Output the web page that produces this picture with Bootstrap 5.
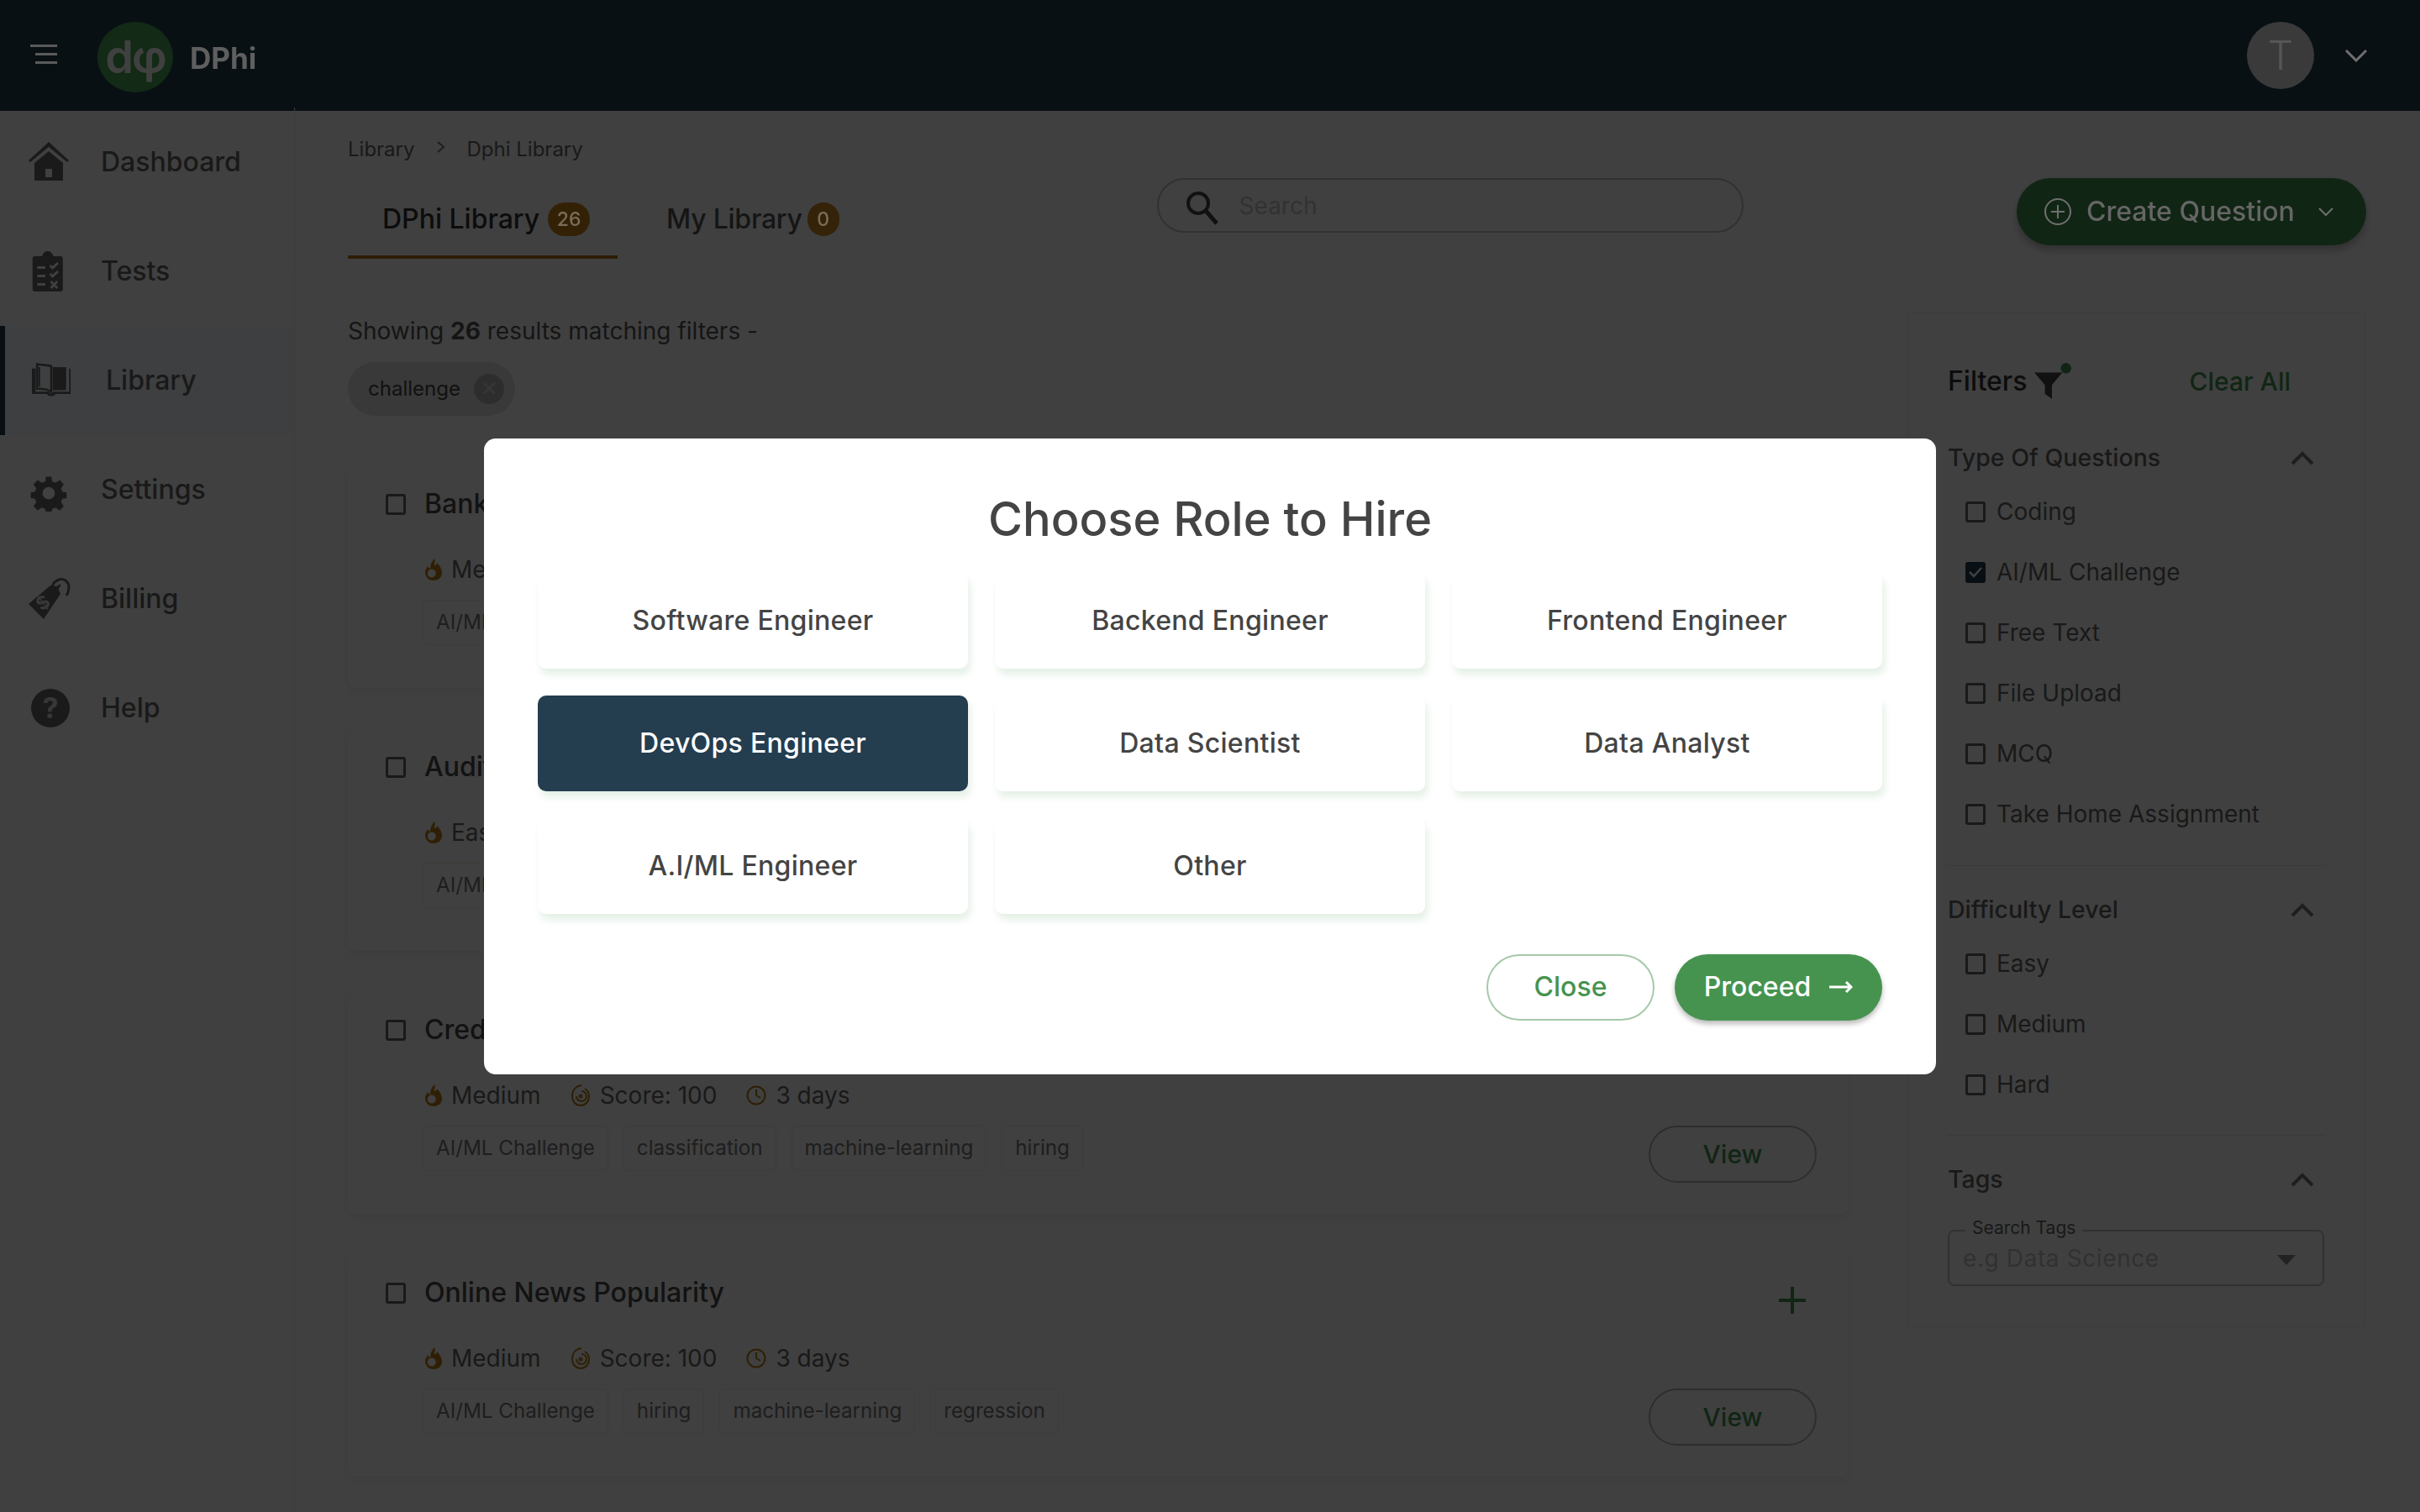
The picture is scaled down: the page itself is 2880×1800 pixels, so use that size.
<!doctype html>
<html lang="en">
<head>
<meta charset="utf-8">
<title>DPhi Library</title>
<link href="https://cdn.jsdelivr.net/npm/bootstrap@5.3.0/dist/css/bootstrap.min.css" rel="stylesheet">
<style>
html,body{height:100%;overflow:hidden}
body{font-family:Inter,"Noto Sans",sans-serif;color:#4a4a4a;background:#fff}
.topbar{height:132px;background:#25424f;flex:none}
.lift{position:relative;z-index:1060}
.burger{width:32px;margin-left:36px;margin-top:-2px}
.logo-disc{width:90px;height:84px;border-radius:50%;background:#4aa758;color:#fff;margin-left:48px;margin-top:4px;font-size:54px;line-height:1;font-weight:600;letter-spacing:-2px}
.logo-word{font-size:35px;font-weight:700;color:#5f5f5f;margin-left:20px;margin-top:6px}
.avatar{width:80px;height:80px;border-radius:50%;background:#e6e6e6;font-size:48px;font-weight:300}
.avatar span{color:#565656}
.top-caret{margin:0 62px 0 36px}
.page-body{height:calc(100vh - 132px)}
.side{width:351px;flex:none;border-right:1px solid #e9e9e9;margin-top:-4px}
.side-row{height:130px;padding-left:32px;gap:36px;font-size:32px;font-weight:500;color:#666}
.side-row.on{background:#f4fbff;box-shadow:inset 6px 0 0 #233d4f}
.side-row.on span{margin-left:6px}
.side-ico{width:52px;height:52px;flex:none}
.main-col{min-width:0;flex:1}
.head-zone{height:188px;padding:0 64px 0 63px;box-shadow:0 3px 6px rgba(0,0,0,.025)}
.crumbs{font-size:24px;color:#666;height:86px;padding-top:28px;gap:25px}
.tabs-row{height:97px}
.lib-tab{height:90px;padding:0 33px 0 41px;font-size:32px;font-weight:500;color:#555;gap:10px;border-bottom:4px solid transparent}
.lib-tab.on{border-bottom-color:#b8741a;color:#333;margin-right:17px}
.lib-tab.off{padding-left:41px;letter-spacing:-.25px;gap:6px}
.count{height:40px;border-radius:20px;min-width:38px;background:#cf8a25;font-size:23px;padding:0 8px;letter-spacing:0}
.count span{color:#7a6d5a}
.count.strong{width:50px;background:#c98319}
.search-box{position:relative;width:698px;height:65px;border:2px solid #c2c2c2;border-radius:33px;margin-left:345px;margin-top:-6px;color:#c6c6c6;font-size:28px;padding-left:96px}
.search-box svg{position:absolute;left:30px;top:11px}
.new-q{width:416px;height:80px;border-radius:40px;background:#46934f;color:#666;font-size:32px;font-weight:500;box-shadow:0 6px 10px rgba(0,0,0,.25);margin-left:auto;margin-top:-6px;padding:0 0 0 32px;gap:17px}
.new-q span{width:258px}
.body-zone{padding:56px 65px 0 63px;gap:70px}
.results{width:1786px;flex:none}
.shown{font-size:28px;color:#555;line-height:36px;height:36px}
.chip-x{display:inline-flex;height:64px;border-radius:32px;background:#e3e3e3;padding:0 13px 0 24px;gap:16px;font-size:24px;color:#444;margin-top:19px;width:199px}
.chip-x i{width:36px;height:36px;border-radius:50%;background:#b5b5b5;color:#d8d8d8;font-style:normal;font-size:24px;line-height:36px;text-align:center}
.q-card{height:270px;margin-bottom:43px;border-radius:10px;box-shadow:0 5px 12px rgba(0,0,0,.07);padding:27px 38px 0 45px;position:relative}
.q-first{margin-top:54px}
.tick{width:24px;height:25px;border:3px solid #666;border-radius:3px;flex:none}
.tick.ok{background:#233d4f;border-color:#233d4f;display:flex;align-items:center;justify-content:center}
.q-title{font-size:32px;font-weight:500;color:#4a4a4a;margin-left:22px}
.q-meta{font-size:28px;color:#666;margin:34px 0 0 47px;height:40px}
.q-meta span{display:inline-flex;align-items:center;gap:11px;margin-right:35px}
.q-tags{gap:18px;margin:16px 0 0 44px;font-size:24.2px;color:#777}
.q-tag{height:54px;padding:0 15px;border:1px solid #eee;border-radius:5px;display:flex;align-items:center}
.q-tag.lead-tag{border-color:#f6eedd}
.view-btn{width:200px;height:68px;border:2px solid #b5b5b5;border-radius:34px;color:#46934f;font-size:30px;font-weight:500;position:absolute;right:38px;bottom:37px}
.add-btn{position:absolute;right:50px;top:43px}
.filter-box{width:545px;flex:none;height:1208px;margin-top:-4px;border:1px solid #f0f0f0;padding:58px 48px 0 47px}
.f-head{height:46px}
.f-head b{font-size:32px;font-weight:500;color:#333}
.f-clear{font-size:30px;font-weight:500;color:#46934f;margin-left:auto;margin-right:40px}
.f-group{border-bottom:1px solid #e6e6e6}
.f-group-type{height:554px;padding-top:48px}
.f-group-level{height:321px;padding-top:32px}
.f-group-tags{padding-top:32px}
.f-name{font-size:28.5px;font-weight:500;color:#666;height:40px;padding-right:12px}
.f-item{height:72px;padding-left:21px;gap:13px;font-size:28px;color:#666}
.f-pick{position:relative;height:67px;border:2px solid #c4c4c4;border-radius:8px;margin-top:40px;padding-left:16px;font-size:28px;color:#c4c4c4;letter-spacing:.6px}
.f-pick em{position:absolute;left:19px;top:-17px;background:#fff;padding:0 8px;font-style:normal;font-size:21px;color:#666;line-height:26px;letter-spacing:0}
.f-pick u{position:absolute;right:32px;top:28px;border:11px solid transparent;border-top:12px solid #888;border-bottom:0}
.modal-backdrop.show{opacity:.75}
.role-dialog{max-width:1728px;width:1728px;margin:0 auto;min-height:100%}
.role-sheet{border:0;border-radius:14px;padding:64px;background:#fff}
.role-title{font-size:56px;font-weight:500;color:#444;line-height:68px;margin:-2px 0 30px;text-align:center}
.role-grid{display:grid;grid-template-columns:repeat(3,1fr);gap:32px}
.role-tile{height:114px;border-radius:10px;background:#fff;font-size:32px;font-weight:500;letter-spacing:.3px;color:#444;box-shadow:3px 7px 9px rgba(70,147,80,.14)}
.role-tile.picked{background:#243d4f;color:#fff}
.role-foot{gap:24px;margin-top:48px}
.pill{height:79px;border-radius:40px;font-size:32px;font-weight:500}
.pill-line{width:200px;border:2px solid #a5c9a9;color:#46934f;background:#fff}
.pill-fill{width:247px;background:#46934f;color:#fff;gap:22px;box-shadow:0 4px 6px rgba(0,0,0,.28)}
</style>
</head>
<body class="d-flex flex-column">
<header class="topbar d-flex align-items-center">
  <svg class="burger lift" viewBox="0 0 32 24" height="24" fill="#5a5a5a"><rect x="0" y="0" width="32" height="3"/><rect x="6" y="10" width="26" height="3"/><rect x="6" y="20" width="26" height="3"/></svg>
  <div class="logo-disc d-flex align-items-center justify-content-center">dφ</div>
  <div class="logo-word lift">DPhi</div>
  <div class="avatar d-flex align-items-center justify-content-center ms-auto"><span class="lift">T</span></div>
  <svg class="top-caret lift" width="28" height="16" viewBox="0 0 28 16" fill="none" stroke="#6f6f6f" stroke-width="3"><path d="M2 2l12 12L26 2"/></svg>
</header>
<div class="page-body d-flex">
  <aside class="side">
    <div class="side-row d-flex align-items-center">
      <svg class="side-ico" viewBox="0 0 52 52" fill="#6a6a6a"><path d="M26 2L2 24l2 2L26 8l22 18 2-2z"/><path d="M9 27L26 13l17 14v21H9zm13 7v10h8V34z" fill-rule="evenodd"/></svg><span>Dashboard</span></div>
    <div class="side-row d-flex align-items-center">
      <svg class="side-ico" viewBox="0 0 52 52" fill="#6a6a6a"><path transform="translate(1 0) scale(.95 1)" fill-rule="evenodd" d="M9 8h9c1-4 4-6 7-6s6 2 7 6h9c2 0 3 1 3 3v36c0 2-1 3-3 3H9c-2 0-3-1-3-3V11c0-2 1-3 3-3zm3 12v3h10v-3zm0 10v3h10v-3zm0 10v3h10v-3zm15-20l4 4 8-7-2-2-6 5-2-2zm0 10l4 4 8-7-2-2-6 5-2-2zm1 9l3 3-3 3 2 2 3-3 3 3 2-2-3-3 3-3-2-2-3 3-3-3z"/></svg><span>Tests</span></div>
    <div class="side-row on d-flex align-items-center">
      <svg class="side-ico" viewBox="0 0 52 52" fill="#6a6a6a"><g transform="translate(6 3) scale(.885)"><path d="M7 4l17 2c1 0 2 1 2 2v33c-4-3-10-4-19-4z" fill="none" stroke="#6a6a6a" stroke-width="3"/><path d="M28 8h18v31H28z"/><path d="M2 10h3v31h18l3 3 3-3h21V10h2v34H32l-3 3h-6l-3-3H0V10z"/><path d="M10 8v26" stroke="#6a6a6a" stroke-width="2"/></g></svg><span>Library</span></div>
    <div class="side-row d-flex align-items-center">
      <svg class="side-ico" viewBox="0 0 52 52" fill="#6a6a6a"><path fill-rule="evenodd" d="M22 3h8l1 7 5 2 6-4 6 6-4 6 2 5 6 1v8l-6 1-2 5 4 6-6 6-6-4-5 2-1 6h-8l-1-6-5-2-6 4-6-6 4-6-2-5-6-1v-8l6-1 2-5-4-6 6-6 6 4 5-2zm4 15a9 9 0 100 18 9 9 0 000-18z" transform="translate(4.6 8) scale(.82)"/></svg><span>Settings</span></div>
    <div class="side-row d-flex align-items-center">
      <svg class="side-ico" viewBox="0 0 52 52"><path d="M2 32L28 10l8 1 4 9-20 30z" fill="#6a6a6a"/><path d="M32 20c-4-6-2-14 6-17 6-2 11 2 12 8 0 4-1 8-3 11M37 18c-2-3 0-8 3-8" fill="none" stroke="#6a6a6a" stroke-width="3"/><text x="20" y="38" font-size="22" font-weight="700" fill="#fff" fill-opacity=".8" text-anchor="middle" transform="rotate(-35 20 32)" font-family="Inter">$</text></svg><span>Billing</span></div>
    <div class="side-row d-flex align-items-center">
      <svg class="side-ico" viewBox="0 0 52 52"><circle cx="28" cy="26" r="23" fill="#6a6a6a"/><text x="28" y="38" font-size="34" font-weight="700" fill="#fff" fill-opacity=".75" text-anchor="middle" font-family="Inter">?</text></svg><span>Help</span></div>
  </aside>
  <main class="main-col">
    <section class="head-zone">
      <div class="crumbs d-flex"><span>Library</span><svg width="12" height="22" viewBox="0 0 12 22" fill="none" stroke="#777" stroke-width="2" class="mt-1"><path d="M2 5l7 6-7 6"/></svg><span>Dphi Library</span></div>
      <div class="tabs-row d-flex">
        <div class="lib-tab on d-flex align-items-center">DPhi Library <div class="count strong d-flex align-items-center justify-content-center"><span class="lift">26</span></div></div>
        <div class="lib-tab off d-flex align-items-center">My Library <div class="count d-flex align-items-center justify-content-center"><span class="lift">0</span></div></div>
        <div class="search-box d-flex align-items-center"><svg width="44" height="44" viewBox="0 0 44 44" fill="none" stroke="#444" stroke-width="4"><circle cx="17" cy="17" r="12"/><path d="M26 26l13 15" stroke-width="5"/></svg>Search</div>
        <div class="new-q d-flex align-items-center">
          <svg width="34" height="34" viewBox="0 0 34 34" fill="none" stroke="#6f6f6f" stroke-width="2" class="lift"><circle cx="17" cy="17" r="15"/><path d="M17 9v16M9 17h16"/></svg><span class="lift">Create Question</span><svg width="20" height="12" viewBox="0 0 20 12" fill="none" stroke="#6f6f6f" stroke-width="2" class="lift"><path d="M2 2l8 8 8-8"/></svg>
        </div>
      </div>
    </section>
    <section class="body-zone d-flex align-items-start">
      <div class="results">
        <div class="shown">Showing <b>26</b> results matching filters -</div>
        <div class="chip-x align-items-center">challenge <i>✕</i></div>
        <article class="q-card q-first"><div class="d-flex align-items-center"><div class="tick"></div><div class="q-title">Bank</div></div>
          <div class="q-meta d-flex align-items-center"><span><svg width="20" height="26" viewBox="0 0 20 26" fill="#b97b16"><path fill-rule="evenodd" d="M11 0c2 4-1 6 0 8 2 0 3-2 3-3 4 4 6 8 6 12 0 5-4 9-10 9S0 22 0 16c0-3 2-5 3-7 1 2 2 3 3 3 0-5 2-9 5-12zm-1 13a5 5 0 100 9 5 5 0 000-9z"/></svg>Medium</span></div>
          <div class="q-tags d-flex"><div class="q-tag lead-tag">AI/ML Challenge</div></div></article>
        <article class="q-card"><div class="d-flex align-items-center"><div class="tick"></div><div class="q-title">Audit</div></div>
          <div class="q-meta d-flex align-items-center"><span><svg width="20" height="26" viewBox="0 0 20 26" fill="#b97b16"><path fill-rule="evenodd" d="M11 0c2 4-1 6 0 8 2 0 3-2 3-3 4 4 6 8 6 12 0 5-4 9-10 9S0 22 0 16c0-3 2-5 3-7 1 2 2 3 3 3 0-5 2-9 5-12zm-1 13a5 5 0 100 9 5 5 0 000-9z"/></svg>Easy</span></div>
          <div class="q-tags d-flex"><div class="q-tag lead-tag">AI/ML Challenge</div></div></article>
        <article class="q-card"><div class="d-flex align-items-center"><div class="tick"></div><div class="q-title">Credit</div></div>
          <div class="q-meta d-flex align-items-center"><span><svg width="20" height="26" viewBox="0 0 20 26" fill="#b97b16"><path fill-rule="evenodd" d="M11 0c2 4-1 6 0 8 2 0 3-2 3-3 4 4 6 8 6 12 0 5-4 9-10 9S0 22 0 16c0-3 2-5 3-7 1 2 2 3 3 3 0-5 2-9 5-12zm-1 13a5 5 0 100 9 5 5 0 000-9z"/></svg>Medium</span><span><svg width="24" height="28" viewBox="0 0 24 28" fill="none" stroke="#b97b16" stroke-width="2"><path d="M13 2C6 3 2 8 2 15c0 6 4 11 10 11s10-5 10-11c0-4-2-7-5-9"/><path d="M13 9a6 6 0 11-6 6"/><circle cx="12" cy="15" r="1.5"/></svg>Score: 100</span><span><svg width="24" height="26" viewBox="0 0 24 26" fill="none" stroke="#b97b16" stroke-width="2"><circle cx="12" cy="13" r="10.5"/><path d="M12 6v7l5 3"/></svg>3 days</span></div>
          <div class="q-tags d-flex"><div class="q-tag lead-tag">AI/ML Challenge</div><div class="q-tag">classification</div><div class="q-tag">machine-learning</div><div class="q-tag">hiring</div></div>
          <div class="view-btn d-flex align-items-center justify-content-center">View</div></article>
        <article class="q-card"><div class="d-flex align-items-center"><div class="tick"></div><div class="q-title">Online News Popularity</div></div>
          <svg class="add-btn" width="34" height="34" viewBox="0 0 34 34" stroke="#46934f" stroke-width="4"><path d="M17 1v32M1 17h32"/></svg>
          <div class="q-meta d-flex align-items-center"><span><svg width="20" height="26" viewBox="0 0 20 26" fill="#b97b16"><path fill-rule="evenodd" d="M11 0c2 4-1 6 0 8 2 0 3-2 3-3 4 4 6 8 6 12 0 5-4 9-10 9S0 22 0 16c0-3 2-5 3-7 1 2 2 3 3 3 0-5 2-9 5-12zm-1 13a5 5 0 100 9 5 5 0 000-9z"/></svg>Medium</span><span><svg width="24" height="28" viewBox="0 0 24 28" fill="none" stroke="#b97b16" stroke-width="2"><path d="M13 2C6 3 2 8 2 15c0 6 4 11 10 11s10-5 10-11c0-4-2-7-5-9"/><path d="M13 9a6 6 0 11-6 6"/><circle cx="12" cy="15" r="1.5"/></svg>Score: 100</span><span><svg width="24" height="26" viewBox="0 0 24 26" fill="none" stroke="#b97b16" stroke-width="2"><circle cx="12" cy="13" r="10.5"/><path d="M12 6v7l5 3"/></svg>3 days</span></div>
          <div class="q-tags d-flex"><div class="q-tag lead-tag">AI/ML Challenge</div><div class="q-tag">hiring</div><div class="q-tag">machine-learning</div><div class="q-tag">regression</div></div>
          <div class="view-btn d-flex align-items-center justify-content-center">View</div></article>
      </div>
      <aside class="filter-box">
        <div class="f-head d-flex align-items-center"><b>Filters</b>
          <svg width="46" height="46" viewBox="0 0 44 44" class="ms-2"><path d="M1 12h32L21 26v16l-8-6V26z" fill="#444"/><circle cx="37" cy="7" r="6" fill="#46934f"/></svg>
          <span class="f-clear">Clear All</span></div>
        <div class="f-group f-group-type">
          <div class="f-name d-flex align-items-center justify-content-between">Type Of Questions<svg width="28" height="18" viewBox="0 0 28 18" fill="none" stroke="#777" stroke-width="4"><path d="M2 16L14 4l12 12"/></svg></div>
          <div class="f-item d-flex align-items-center mt-2"><div class="tick"></div>Coding</div>
          <div class="f-item d-flex align-items-center"><div class="tick ok"><svg width="16" height="14" viewBox="0 0 16 14" fill="none" stroke="#fff" stroke-width="2.5"><path d="M1 7l5 5 9-10"/></svg></div>AI/ML Challenge</div>
          <div class="f-item d-flex align-items-center"><div class="tick"></div>Free Text</div>
          <div class="f-item d-flex align-items-center"><div class="tick"></div>File Upload</div>
          <div class="f-item d-flex align-items-center"><div class="tick"></div>MCQ</div>
          <div class="f-item d-flex align-items-center"><div class="tick"></div>Take Home Assignment</div>
        </div>
        <div class="f-group f-group-level">
          <div class="f-name d-flex align-items-center justify-content-between">Difficulty Level<svg width="28" height="18" viewBox="0 0 28 18" fill="none" stroke="#777" stroke-width="4"><path d="M2 16L14 4l12 12"/></svg></div>
          <div class="f-item d-flex align-items-center mt-2"><div class="tick"></div>Easy</div>
          <div class="f-item d-flex align-items-center"><div class="tick"></div>Medium</div>
          <div class="f-item d-flex align-items-center"><div class="tick"></div>Hard</div>
        </div>
        <div class="f-group-tags">
          <div class="f-name d-flex align-items-center justify-content-between">Tags<svg width="28" height="18" viewBox="0 0 28 18" fill="none" stroke="#777" stroke-width="4"><path d="M2 16L14 4l12 12"/></svg></div>
          <div class="f-pick d-flex align-items-center"><em>Search Tags</em>e.g Data Science<u></u></div>
        </div>
      </aside>
    </section>
  </main>
</div>
<div class="modal-backdrop show"></div>
<div class="modal d-block" tabindex="-1">
  <div class="modal-dialog modal-dialog-centered role-dialog">
    <div class="modal-content role-sheet">
      <h1 class="role-title">Choose Role to Hire</h1>
      <div class="role-grid">
        <div class="role-tile d-flex align-items-center justify-content-center">Software Engineer</div>
        <div class="role-tile d-flex align-items-center justify-content-center">Backend Engineer</div>
        <div class="role-tile d-flex align-items-center justify-content-center">Frontend Engineer</div>
        <div class="role-tile picked d-flex align-items-center justify-content-center">DevOps Engineer</div>
        <div class="role-tile d-flex align-items-center justify-content-center">Data Scientist</div>
        <div class="role-tile d-flex align-items-center justify-content-center">Data Analyst</div>
        <div class="role-tile d-flex align-items-center justify-content-center">A.I/ML Engineer</div>
        <div class="role-tile d-flex align-items-center justify-content-center">Other</div>
      </div>
      <div class="role-foot d-flex justify-content-end">
        <button type="button" class="btn pill pill-line">Close</button>
        <button type="button" class="btn pill pill-fill d-flex align-items-center justify-content-center">Proceed<svg width="28" height="18" viewBox="0 0 28 18" fill="none" stroke="#fff" stroke-width="3"><path d="M0 9h25M20 3l6 6-6 6"/></svg></button>
      </div>
    </div>
  </div>
</div>
<script src="https://cdn.jsdelivr.net/npm/bootstrap@5.3.0/dist/js/bootstrap.bundle.min.js"></script>
</body>
</html>
